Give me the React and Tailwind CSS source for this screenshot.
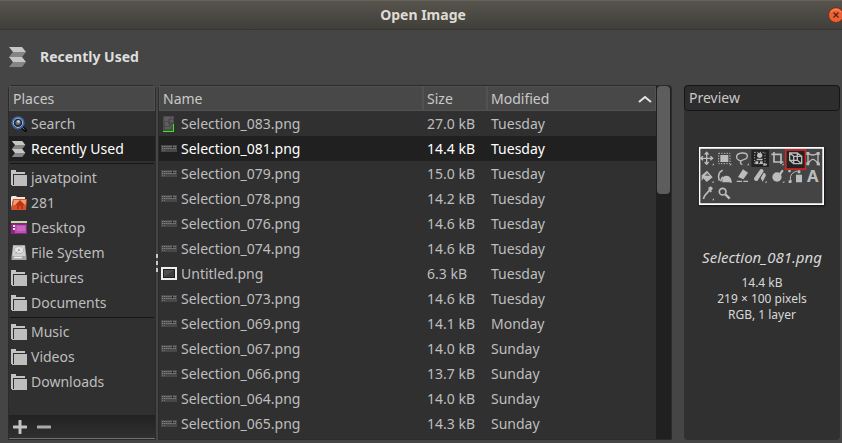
import React from "react";

const files = [
  ["Selection_083.png", "27.0 kB", "Tuesday", "tall"],
  ["Selection_081.png", "14.4 kB", "Tuesday", "strip"],
  ["Selection_079.png", "15.0 kB", "Tuesday", "strip"],
  ["Selection_078.png", "14.2 kB", "Tuesday", "strip"],
  ["Selection_076.png", "14.6 kB", "Tuesday", "strip"],
  ["Selection_074.png", "14.6 kB", "Tuesday", "strip"],
  ["Untitled.png", "6.3 kB", "Tuesday", "frame"],
  ["Selection_073.png", "14.6 kB", "Tuesday", "strip"],
  ["Selection_069.png", "14.1 kB", "Monday", "strip"],
  ["Selection_067.png", "14.0 kB", "Sunday", "strip"],
  ["Selection_066.png", "13.7 kB", "Sunday", "strip"],
  ["Selection_064.png", "14.0 kB", "Sunday", "strip"],
  ["Selection_065.png", "14.3 kB", "Sunday", "strip"],
];

const placeGroups = [
  [["Search", SearchIcon], ["Recently Used", RecentIcon]],
  [
    ["javatpoint", FolderIcon],
    ["281", HomeIcon],
    ["Desktop", DesktopIcon],
    ["File System", DriveIcon],
    ["Pictures", FolderIcon],
    ["Documents", FolderIcon],
  ],
  [["Music", FolderIcon], ["Videos", FolderIcon], ["Downloads", FolderIcon]],
];

function RecentIcon({ className = "size-4" }) {
  return (
    <svg className={className} viewBox="0 0 20 20" aria-hidden="true">
      <path d="M1 0h13l4 5H5z" fill="#c6c6c6" />
      <path d="M5 5h13l-4 5H1z" fill="#858585" />
      <path d="M1 10h13l4 5H5z" fill="#c6c6c6" />
      <path d="M5 15h13l-4 5H1z" fill="#858585" />
    </svg>
  );
}

function SearchIcon() {
  return (
    <svg className="size-4" viewBox="0 0 16 16" aria-hidden="true">
      <path d="M11 11l3.500 3.500" stroke="#0e1013" strokeWidth="3.200" strokeLinecap="round" />
      <path d="M11.500 11.500l2 2" stroke="#77797d" />
      <circle cx="7" cy="6.800" r="5.900" fill="#1c222b" stroke="#3563b4" strokeWidth="1.500" />
      <circle cx="7" cy="6.800" r="4.700" fill="#252a31" stroke="#a9c3ea" />
      <circle cx="7" cy="6.500" r="2.500" fill="#69717a" />
      <circle cx="7.500" cy="5.500" r="1.300" fill="#d5dbe1" />
    </svg>
  );
}

function FolderIcon() {
  return (
    <svg className="size-4" viewBox="0 0 16 16" aria-hidden="true" shapeRendering="crispEdges">
      <path d="M0 0h5v2h9v2H2v11H0z" fill="#c4c4c4" />
      <path d="M3 5h13v11H1v-1h2z" fill="#bebebe" />
    </svg>
  );
}

function HomeIcon() {
  return (
    <svg className="size-4" viewBox="0 0 16 16" aria-hidden="true">
      <path d="M0 14V2l1-1h4l1 1h8v3H2z" fill="#eee9e4" />
      <path d="M2 4h14l-1 11H0z" fill="#d4532e" />
      <path d="M3 5h12l-.5 5H2z" fill="#f0a06a" />
      <path d="M9 5l5 5h-2v4h-2v-3H8v3H6v-4H4z" fill="#bd3414" />
    </svg>
  );
}

function DesktopIcon() {
  return (
    <svg className="size-4" viewBox="0 0 16 16" aria-hidden="true" shapeRendering="crispEdges">
      <path d="M0 1h16v13H0z" fill="#8e2488" />
      <path d="M4 5h11v8H4z" fill="#b854ad" />
      <path d="M6 6h8v5H6z" fill="#c767bd" />
      <path d="M0 1h16v3H0z" fill="#4d4940" />
      <path d="M0 1h16v2H0z" fill="#d8d3bf" />
      <path d="M2 5h2v2H2zM2 8h2v2H2z" fill="#f4e8f2" />
    </svg>
  );
}

function DriveIcon() {
  return (
    <svg className="size-4" viewBox="0 0 16 16" aria-hidden="true">
      <path d="M2 0h12l1.500 12v3H.5v-3z" fill="#a6a6a6" />
      <path d="M2.500 1h11l1 10h-13z" fill="#d2d2d2" />
      <ellipse cx="8" cy="5" rx="4.500" ry="3.500" fill="#e4e4e4" stroke="#a0a0a0" strokeWidth=".6" />
      <circle cx="8" cy="5" r="1" fill="#999" />
      <path d="M4.500 8.500l2-2" stroke="#999" strokeWidth=".8" />
      <path d="M3 12.500h8" stroke="#ededed" strokeWidth="1.500" />
    </svg>
  );
}

function Thumbnail({ kind }) {
  if (kind === "tall") {
    return (
      <svg className="size-4" viewBox="0 0 16 16" aria-hidden="true">
        <path d="M2 0h11v16H2z" fill="#4b4b4b" />
        <path d="M4 2h5M10 2h2M3 4h4M9 5h3M4 7h3M4 9h4M10 10h1M4 12h6" stroke="#858585" strokeWidth=".7" />
        <path d="M2 15h11v1H2zM12 8h1v8h-1z" fill="#31ef18" />
      </svg>
    );
  }
  if (kind === "frame") {
    return (
      <svg className="size-4" viewBox="0 0 16 16" aria-hidden="true">
        <path d="M0 1h16v13H0z" fill="#eee" />
        <path d="M2 3h12v9H2z" fill="#202020" />
        <path d="M3 4h10v7H3z" fill="#505050" />
        <path d="M3 11l10-7v7z" fill="#3e3e3e" />
      </svg>
    );
  }
  return (
    <svg className="size-4" viewBox="0 0 16 16" aria-hidden="true">
      <path d="M0 4h16v7H0z" fill="#484848" />
      <path d="M1 5.500h14M1 7.500h14" stroke="#858585" strokeDasharray="1.300 .8" />
      <path d="M1 9.500h4" stroke="#707070" strokeDasharray="1 1" />
      <path d="M11 5h1v2h-1z" fill="#222" />
    </svg>
  );
}

function ToolPreview() {
  return (
    <svg
      className="mr-0.5 h-[58px] w-[125px] shadow-[1px_1px_2px_#151515]"
      viewBox="57 49 375 174"
      role="img"
      aria-label="Preview of Selection_081.png"
    >
      <path d="M57 49h375v174H57z" fill="#fff" />
      <path d="M61 54h366v164H61z" fill="#444" />
      <path d="M214 57h53v52h-53zM320 60h55v54h-55z" fill="#222" />
      <g fill="none" stroke="#bcbcbc" strokeWidth="4">
        <path d="M80 66v34M63 83h34M74 72l6-7 6 7M74 94l6 7 6-7M69 77l-7 6 7 6M91 77l7 6-7 6" />
        <path d="M116 68h34v31h-34z" strokeDasharray="4 4" strokeWidth="3" />
        <path d="M183 91c-18-5-18-22 3-24 20-1 21 16 5 20-10 3-14 10-4 15" />
        <path d="M224 65h31v34h-31z" strokeDasharray="3 5" strokeWidth="3" />
        <path d="M282 64v30h28M274 71h29v29" strokeWidth="5" />
        <path d="M329 67h23v22h-23zM341 77h24v22h-24zM329 67l12 10M352 67l13 10M352 89l13 10M329 89l12 10" />
        <path d="M384 68c14 8 19 5 30 0M384 99c11-17 18-17 30 0M384 68v31M414 68v31" />
        <path d="M118 150c-5-13-2-26 10-31M122 152c1-6 3-10 7-13" strokeWidth="5" />
        <path d="M170 152h16M190 152h14M300 128l8-9" />
        <path d="M334 153c-7-15-1-27 18-32" strokeWidth="3" />
        <path d="M70 205l4-10 16-18M86 176l8 8" strokeWidth="5" />
        <circle cx="128" cy="183" r="10" strokeWidth="5" />
        <path d="M136 191l13 13" strokeWidth="7" />
      </g>
      <g fill="#bcbcbc">
        <path d="M121 73h24v21h-24z" />
        <circle cx="239" cy="74" r="8" />
        <path d="M230 84h18v5h-18zM226 92h9v8h-9zM240 92h8v8h-8zM250 98h7v7h-7z" />
        <path d="M379 64h9v9h-9zM410 64h9v9h-9zM379 95h9v9h-9zM410 95h9v9h-9z" />
        <path d="M65 134l16-14 17 20-18 14-10-11-5 8z" />
        <path d="M127 147q1-12 12-12t15 12v8h-27z" />
        <path d="M174 139l15-23 15 10-14 20z" />
        <path d="M222 143l19-27q8-3 10 6l-19 29q-10 2-10-8zM242 142l9-16q8 2 6 10l-9 17z" />
        <circle cx="291" cy="139" r="14" />
        <path d="M296 130l10-13 5 3-10 15zM348 132h18v23h-18zM353 119h8v9h-8z" />
        <path d="M325 118h7v7h-7zM326 149h8v8h-8z" />
        <path d="M84 172l8-5 7 6-6 8z" />
        <path d="M102 98v6h-6zM154 98v6h-6zM207 98v6h-6zM261 98v6h-6zM311 98v6h-6zM420 98v6h-6zM101 150v6h-6zM155 150v6h-6zM260 150v6h-6zM313 150v6h-6zM102 203v6h-6z" />
      </g>
      <path d="M74 135l8-8 8 9z" fill="#686868" />
      <path d="M317 58h59v57h-59z" fill="none" stroke="#e12020" strokeWidth="4" />
      <text x="398" y="154" textAnchor="middle" fill="#bcbcbc" className="font-['Noto_Sans',sans-serif] text-[50px] font-bold">A</text>
    </svg>
  );
}

function Places() {
  return (
    <nav aria-label="Places" className="flex w-[148px] shrink-0 flex-col rounded-t-sm border border-[#2b2b2b] bg-[#303030]">
      <h2 className="h-[25px] border border-[#525252] bg-[#484848] px-[3px] leading-6 text-[#c8c8c8]">Places</h2>
      {placeGroups.map((group, index) => (
        <ul key={index} className={index ? "mx-px mt-0.5 border-t border-[#151515] pt-px" : ""}>
          {group.map(([name, Icon]) => (
            <li key={name}>
              <button
                className={
                  "flex h-[25px] w-full items-center gap-1 text-left whitespace-nowrap " +
                  (index ? "px-px " : "px-0.5 ") +
                  (name === "Recently Used" ? "bg-[#202020] text-white" : "")
                }
              >
                <Icon />
                {name}
              </button>
            </li>
          ))}
        </ul>
      ))}
      <div className="mt-auto flex h-6 items-center gap-2.5 border-b border-[#707070] bg-linear-to-b from-[#222] to-[#303030] px-1">
        <button aria-label="Add bookmark">
          <svg className="size-3.5" viewBox="0 0 14 14" aria-hidden="true">
            <path d="M7 1v12M1 7h12" stroke="#c2c2c2" strokeWidth="3" strokeLinecap="round" />
          </svg>
        </button>
        <button aria-label="Remove bookmark">
          <svg className="size-3.5" viewBox="0 0 14 14" aria-hidden="true">
            <path d="M1 7h12" stroke="#aaa" strokeWidth="3" strokeLinecap="round" />
          </svg>
        </button>
      </div>
    </nav>
  );
}

function FileTable() {
  const head = "h-[25px] border border-[#525252] bg-[#484848] p-0 px-[3px] text-left font-normal text-[#c8c8c8]";
  return (
    <section className="flex min-w-0 flex-1 rounded-t-sm border border-[#2b2b2b] bg-[#303030]">
      <div className="min-w-0 flex-1">
        <table id="files" className="w-full table-fixed border-separate border-spacing-0">
          <colgroup>
            <col />
            <col className="w-16" />
            <col className="w-[169px]" />
          </colgroup>
          <thead>
            <tr>
              <th className={head}>Name</th>
              <th className={head}>Size</th>
              <th className={head}>
                <button className="flex w-full items-center justify-between">
                  Modified
                  <svg className="h-2 w-3.5" viewBox="0 0 14 8" aria-hidden="true">
                    <path d="M1 7l6-5 6 5" fill="none" stroke="#e4e4e4" strokeWidth="2" />
                  </svg>
                </button>
              </th>
            </tr>
          </thead>
          <tbody>
            {files.map(([name, size, day, kind], index) => (
              <tr key={name} className={index === 1 ? "h-[25px] bg-[#202020] text-white" : "h-[25px]"}>
                <td className="p-0 pl-0.5">
                  <div className="flex items-center gap-1">
                    <Thumbnail kind={kind} />
                    {name}
                  </div>
                </td>
                <td className="p-0 pl-1 whitespace-nowrap">{size}</td>
                <td className="p-0 pl-1">{day}</td>
              </tr>
            ))}
          </tbody>
        </table>
      </div>
      <div className="w-[15px] shrink-0 bg-[#202020] px-px" role="scrollbar" aria-controls="files" aria-valuenow={0} aria-orientation="vertical">
        <div className="h-[108px] rounded-sm bg-[#5d5d5d]" />
      </div>
    </section>
  );
}

function Preview() {
  return (
    <aside className="ml-3 mr-0.5 w-[156px] shrink-0 rounded-sm bg-[#303030]">
      <h2 className="h-[26px] rounded-sm border border-[#151515] bg-[#2d2d2d] px-1 leading-6 text-[#c8c8c8]">Preview</h2>
      <div className="flex flex-col items-center pt-9 text-center text-[#d8d8d8]">
        <ToolPreview />
        <p className="mt-10 text-[15px] leading-6 italic">Selection_081.png</p>
        <div className="mt-1.5 text-xs leading-4">
          <p>14.4 kB</p>
          <p>219 × 100 pixels</p>
          <p>RGB, 1 layer</p>
        </div>
      </div>
    </aside>
  );
}

export default function App() {
  return (
    <div className="flex min-h-screen flex-col bg-[#454545] font-['Noto_Sans',sans-serif] text-sm leading-5 text-[#bebebe]">
      <header className="grid h-[30px] grid-cols-[1fr_auto_1fr] items-center border-t border-b border-t-[#66635c] border-b-[#363532] bg-linear-to-b from-[#57544d] to-[#403f3a]">
        <h1 className="col-start-2 pl-1 font-bold text-[#dfdbd2]">Open Image</h1>
        <button aria-label="Close" className="-mr-0.5 justify-self-end">
          <svg className="size-4" viewBox="0 0 16 16" aria-hidden="true">
            <circle cx="8" cy="8" r="7.500" fill="#ee6135" stroke="#752f1c" />
            <path d="M3 5q5-5 10 0" fill="none" stroke="#f6936c" />
            <path d="M5.500 5.500l5 5M10.500 5.500l-5 5" stroke="#552315" strokeWidth="1.300" />
          </svg>
        </button>
      </header>
      <div className="flex h-[55px] items-center gap-3 px-2 pb-0.5 font-bold text-[#dedede]">
        <RecentIcon className="size-5" />
        <span>Recently Used</span>
      </div>
      <main className="flex flex-1 pb-[3px] pl-2">
        <Places />
        <div className="flex w-0.5 flex-col items-center justify-center gap-[3px]" aria-hidden="true">
          <i className="h-1 w-0.5 bg-[#c8c8c8]" />
          <i className="h-1 w-0.5 bg-[#c8c8c8]" />
          <i className="h-1 w-0.5 bg-[#c8c8c8]" />
        </div>
        <FileTable />
        <Preview />
      </main>
    </div>
  );
}
